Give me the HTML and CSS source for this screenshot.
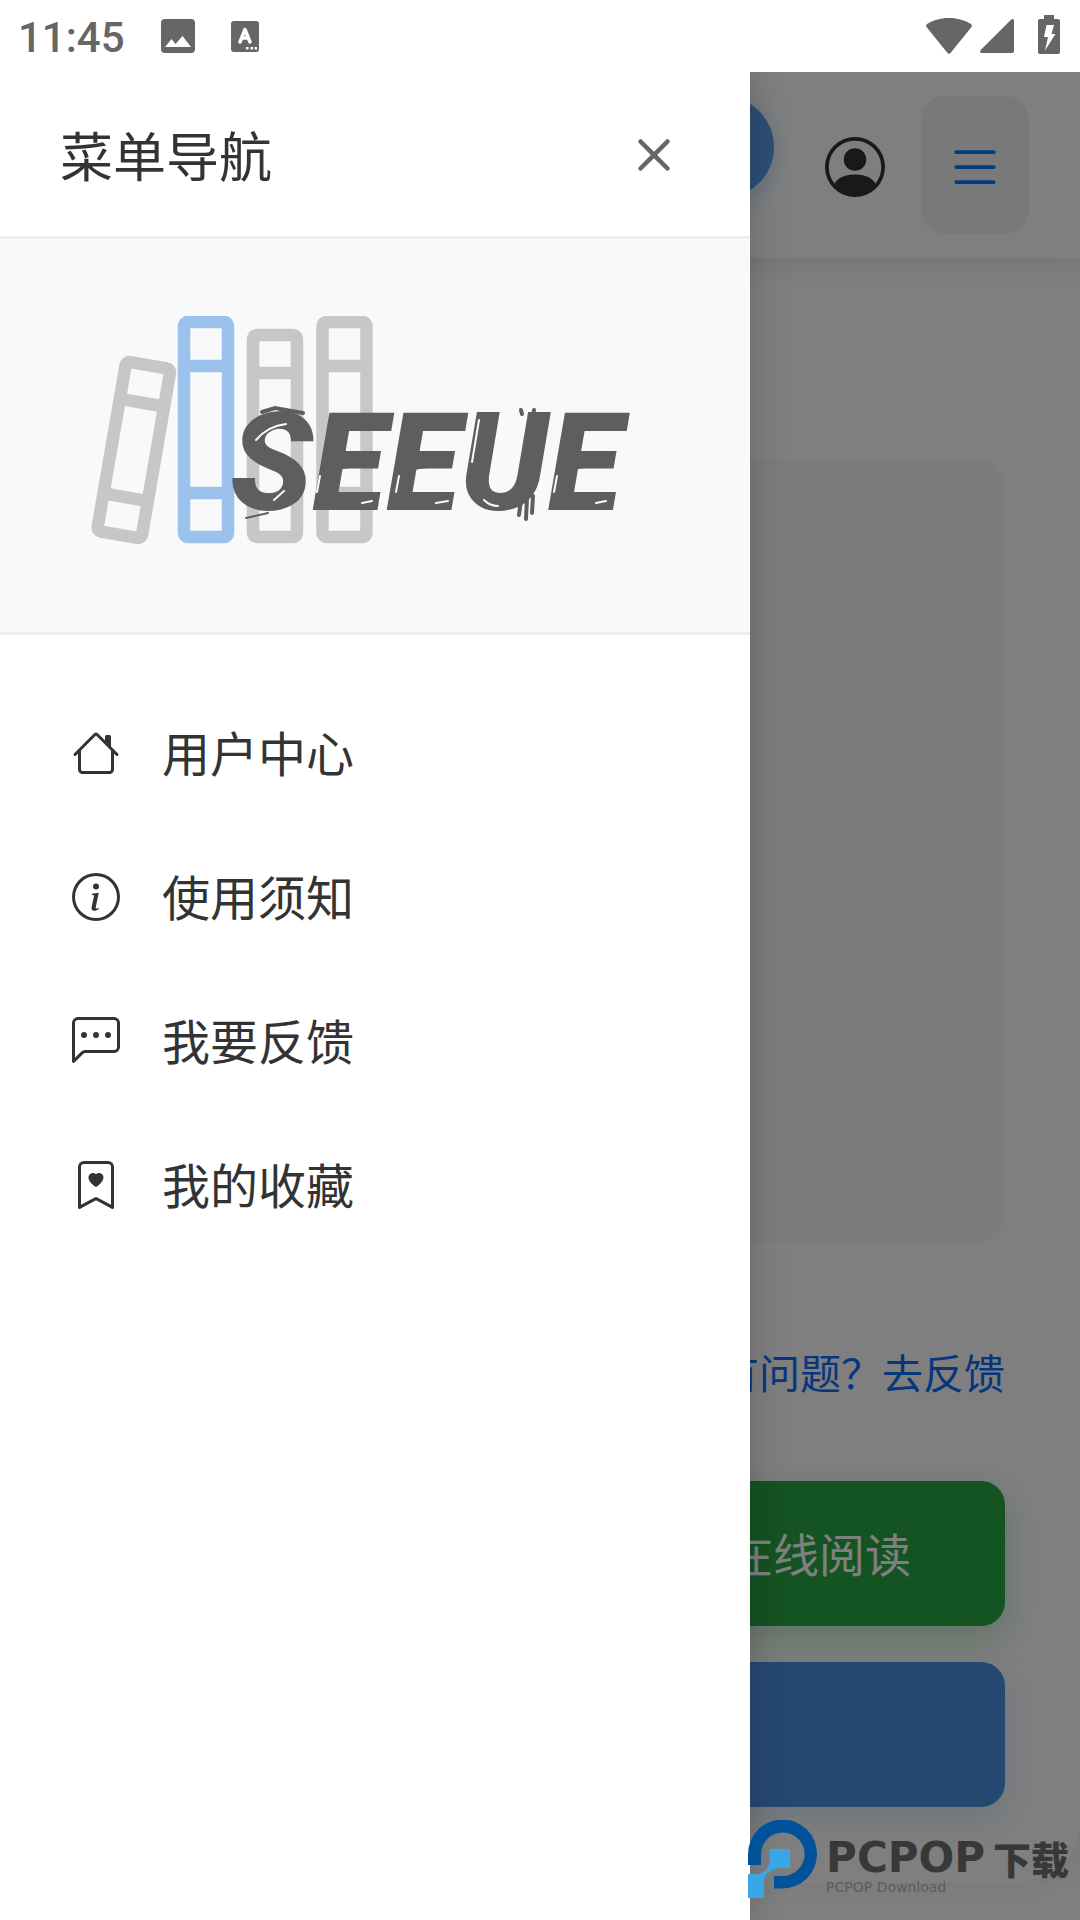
FILE: index.html
```html
<!DOCTYPE html>
<html lang="zh-CN">
<head>
<meta charset="utf-8">
<meta name="viewport" content="width=device-width, initial-scale=1">
<title>菜单导航</title>
<link rel="stylesheet" href="styles.css">
</head>
<body>
<div class="status-bar">
  <div class="status-group">
    <span class="clock">11:45</span>
    <svg class="status-picture" viewBox="0 0 34 34" aria-hidden="true"><path fill-rule="evenodd" d="M4 0H30Q34 0 34 4V30Q34 34 30 34H4Q0 34 0 30V4Q0 0 4 0ZM4 28H30L21.500 17L14.500 25L10.500 20Z"/></svg>
    <svg class="status-input" viewBox="0 0 28 31" aria-hidden="true"><rect width="28" height="31" rx="3"/><path d="M9 21L14 8.500L19 21M11 17H17" fill="none" stroke="#fff" stroke-width="3.500" stroke-linecap="round" stroke-linejoin="round"/><path d="M15 26h2.500v2.500H15zM19.500 26H22v2.500h-2.500zM23.500 26H26v2.500h-2.500z" fill="#fff"/></svg>
  </div>
  <div class="status-group status-group-end">
    <svg class="status-wifi" viewBox="0 0 46 36" aria-hidden="true"><path d="M23 0C14 0 7 2.500 1 6Q-.5 7.500 .5 9L21.500 35Q23 36.500 24.500 35L45.500 9Q46.500 7.500 45 6C39 2.500 32 0 23 0Z"/></svg>
    <svg class="status-cell" viewBox="0 0 34 34" aria-hidden="true"><path d="M31 .7Q34-1 34 2V32Q34 34 32 34H2Q-1 34 .7 31Z"/></svg>
    <svg class="status-battery" viewBox="0 0 22 39" aria-hidden="true"><path fill-rule="evenodd" d="M6 0H16V4H20Q22 4 22 6V37Q22 39 20 39H2Q0 39 0 37V6Q0 4 2 4H6ZM8.500 10L6 22H10L7 35.500L17.500 19H13.500L16 10Z"/></svg>
  </div>
</div>

<div class="app">
  <div class="page">
    <header class="page-header">
      <button class="search-button" type="button" aria-label="搜索"></button>
      <a class="account" href="#" aria-label="用户中心">
        <svg viewBox="0 0 16 16" aria-hidden="true"><path d="M11 6a3 3 0 1 1-6 0 3 3 0 0 1 6 0"/><path fill-rule="evenodd" d="M0 8a8 8 0 1 1 16 0A8 8 0 0 1 0 8m8-7a7 7 0 0 0-5.468 11.370C3.242 11.226 4.805 10 8 10s4.757 1.225 5.468 2.370A7 7 0 0 0 8 1"/></svg>
      </a>
      <button class="menu-button" type="button" aria-label="菜单">
        <svg viewBox="0 0 16 16" aria-hidden="true"><path fill-rule="evenodd" d="M2.500 12a.5.5 0 0 1 .5-.5h10a.5.5 0 0 1 0 1H3a.5.5 0 0 1-.5-.5m0-4a.5.5 0 0 1 .5-.5h10a.5.5 0 0 1 0 1H3a.5.5 0 0 1-.5-.5m0-4a.5.5 0 0 1 .5-.5h10a.5.5 0 0 1 0 1H3a.5.5 0 0 1-.5-.5"/></svg>
      </button>
    </header>
    <main class="content">
      <div class="cover"></div>
      <a class="feedback-link" href="#">有问题？去反馈</a>
      <button class="action action-read" type="button">在线阅读</button>
      <button class="action action-download" type="button" aria-label="下载"></button>
    </main>
  </div>

  <div class="backdrop"></div>

  <aside class="drawer">
    <div class="drawer-header">
      <h1 class="drawer-title">菜单导航</h1>
      <button class="close-button" type="button" aria-label="关闭">
        <svg viewBox="0 0 16 16" aria-hidden="true"><path d="M4.646 4.646a.5.5 0 0 1 .708 0L8 7.293l2.646-2.647a.5.5 0 0 1 .708.708L8.707 8l2.647 2.646a.5.5 0 0 1-.708.708L8 8.707l-2.646 2.647a.5.5 0 0 1-.708-.708L7.293 8 4.646 5.354a.5.5 0 0 1 0-.708"/></svg>
      </button>
    </div>
    <div class="brand">
      <svg class="brand-logo" viewBox="90 316 540 228" role="img" aria-label="SEEUE">
        <g fill="none" stroke-width="12.500">
          <g stroke="#c7c7c7">
            <g transform="rotate(9.800 134 449)"><rect x="111.500" y="364" width="45" height="172" rx="4"/><path d="M111.500 402H156.500M111.500 498H156.500"/></g>
            <rect x="253" y="335" width="44" height="202" rx="4"/><path d="M253 373H297M253 499H297"/>
            <rect x="322.500" y="322" width="44" height="215" rx="4"/><path d="M322.500 366H366.500M322.500 493H366.500"/>
          </g>
          <g stroke="#9ac2ec"><rect x="184" y="322" width="44" height="215" rx="4"/><path d="M184 366H228M184 493H228"/></g>
        </g>
        <text class="brand-word" x="230" y="510">SEEUE</text>
        <g fill="none" stroke="#5e5e5e" stroke-linecap="round">
          <path d="M246 518L268 513M340 429L368 429M418 429L446 429M574 429L602 429M335 469L357 466M413 469L434 466M570 469L592 466" stroke-width="2"/>
          <path d="M521 500L519 515M527 498L526 519M533 496L532 513" stroke-width="4"/>
          <path d="M262 412L275 408L303 413M522 414L521 410M533 416L534 410" stroke-width="4"/>
        </g>
        <g fill="none" stroke="#f8f9fb" stroke-width="2" stroke-linecap="round">
          <path d="M256 440Q268 426 286 424M274 500L284 491M320 476L317 492M399 476L396 492M557 476L554 492M479 420L472 462M484 500Q490 506 498 506M504 480L512 468M362 503L372 501M436 503L448 501M596 503L606 501"/>
        </g>
      </svg>
    </div>
    <nav class="menu">
      <a class="menu-item" href="#">
        <svg viewBox="0 0 16 16" aria-hidden="true"><path fill-rule="evenodd" d="M2 13.500V7h1v6.500a.5.5 0 0 0 .5.5h9a.5.5 0 0 0 .5-.5V7h1v6.500a1.500 1.500 0 0 1-1.500 1.500h-9A1.500 1.500 0 0 1 2 13.500m11-11V6l-2-2V2.500a.5.5 0 0 1 .5-.5h1a.5.5 0 0 1 .5.5"/><path fill-rule="evenodd" d="M7.293 1.500a1 1 0 0 1 1.414 0l6.647 6.646a.5.5 0 0 1-.708.708L8 2.207 1.354 8.854a.5.5 0 1 1-.708-.708z"/></svg>
        <span>用户中心</span>
      </a>
      <a class="menu-item" href="#">
        <svg viewBox="0 0 16 16" aria-hidden="true"><path d="M8 15A7 7 0 1 1 8 1a7 7 0 0 1 0 14m0 1A8 8 0 1 0 8 0a8 8 0 0 0 0 16"/><path d="m8.930 6.588-2.290.287-.082.380.450.083c.294.070.352.176.288.469l-.738 3.468c-.194.897.105 1.319.808 1.319.545 0 1.178-.252 1.465-.598l.088-.416c-.2.176-.492.246-.686.246-.275 0-.375-.193-.304-.533zM9 4.500a1 1 0 1 1-2 0 1 1 0 0 1 2 0"/></svg>
        <span>使用须知</span>
      </a>
      <a class="menu-item" href="#">
        <svg viewBox="0 0 16 16" aria-hidden="true"><path d="M14 1a1 1 0 0 1 1 1v8a1 1 0 0 1-1 1H4.414A2 2 0 0 0 3 11.586l-2 2V2a1 1 0 0 1 1-1zM2 0a2 2 0 0 0-2 2v12.793a.5.5 0 0 0 .854.353l2.853-2.853A1 1 0 0 1 4.414 12H14a2 2 0 0 0 2-2V2a2 2 0 0 0-2-2z"/><path d="M5 6a1 1 0 1 1-2 0 1 1 0 0 1 2 0m4 0a1 1 0 1 1-2 0 1 1 0 0 1 2 0m4 0a1 1 0 1 1-2 0 1 1 0 0 1 2 0"/></svg>
        <span>我要反馈</span>
      </a>
      <a class="menu-item" href="#">
        <svg viewBox="0 0 16 16" aria-hidden="true"><path fill-rule="evenodd" d="M8 4.410c1.387-1.425 4.854 1.070 0 4.277C3.146 5.480 6.613 2.986 8 4.412z"/><path d="M2 2a2 2 0 0 1 2-2h8a2 2 0 0 1 2 2v13.500a.5.5 0 0 1-.777.416L8 13.101l-5.223 2.815A.5.5 0 0 1 2 15.500zm2-1a1 1 0 0 0-1 1v12.566l4.723-2.482a.5.5 0 0 1 .554 0L13 14.566V2a1 1 0 0 0-1-1z"/></svg>
        <span>我的收藏</span>
      </a>
    </nav>
  </aside>

  <div class="watermark">
    <svg class="watermark-mark" viewBox="0 0 70 78" aria-hidden="true"><path d="M0 45V34A34.500 34.500 0 1 1 34.500 68.500H26V56H34.500A21.800 21.800 0 1 0 13 34V45Z" fill="#00529b"/><path d="M22 29H42V48H32C24 48 16 54 16 61V78H0V54H8C16 54 22 48 22 40Z" fill="#38a7e6"/></svg>
    <div class="watermark-text">
      <div class="watermark-name">PCPOP<span>下载</span></div>
      <div class="watermark-sub">PCPOP Download</div>
    </div>
  </div>
</div>
</body>
</html>
```
FILE: styles.css
```css
* {
  box-sizing: border-box;
}

body {
  margin: 0;
  min-height: 100vh;
  display: flex;
  flex-direction: column;
  background: #fff;
  color: #333;
  font-family: "Noto Sans CJK SC", sans-serif;
}

svg {
  display: block;
  flex: none;
}

button {
  border: 0;
  padding: 0;
  font: inherit;
}

a {
  color: inherit;
  text-decoration: none;
}

.status-bar {
  display: flex;
  justify-content: space-between;
  height: 72px;
  padding: 0 20px 0 18px;
  color: #666;
}

.status-group {
  display: flex;
  align-items: center;
  gap: 36px;
}

.status-group-end {
  gap: 8px;
}

.status-group svg {
  fill: currentColor;
}

.clock {
  padding-top: 4px;
  font: 500 42px/68px Roboto, sans-serif;
}

.status-picture {
  width: 34px;
}

.status-input {
  width: 28px;
}

.status-wifi {
  width: 46px;
}

.status-cell {
  width: 34px;
}

.status-battery {
  width: 22px;
  margin: 0 0 4px 16px;
}

.app {
  position: relative;
  flex: 1;
  overflow: hidden;
}

.page {
  min-height: 100%;
  background: #fcfcfc;
}

.page-header {
  position: relative;
  display: flex;
  align-items: center;
  justify-content: flex-end;
  padding: 24px 51px;
  background: #fff;
  box-shadow: 0 6px 30px rgba(0, 0, 0, 0.1);
}

.search-button {
  align-self: flex-start;
  width: 102px;
  height: 102px;
  border-radius: 51px;
  background: #5a9ced;
  box-shadow: 0 6px 24px rgba(74, 144, 226, 0.3);
}

.account {
  margin: 0 36px 0 51px;
  padding-top: 4px;
}

.account svg,
.menu-button svg {
  width: 60px;
  height: 60px;
}

.account svg {
  fill: #333;
}

.menu-button {
  padding: 41px 24px 37px;
  border-radius: 24px;
  background: #f2f2f2;
}

.menu-button svg {
  fill: #007bff;
}

.content {
  display: flex;
  flex-direction: column;
  gap: 36px;
  padding: 200px 75px 76px;
  border-radius: 0 0 60px 60px;
  background: #fff;
  box-shadow: 0 3px 30px rgba(0, 0, 0, 0.05);
}

.cover {
  height: 785px;
  border-radius: 30px;
  background: #f9f9f9;
}

.feedback-link {
  align-self: flex-end;
  margin: 62px 0 44px;
  color: #0d6efd;
  font-size: 41px;
  line-height: 60px;
}

.action {
  height: 145px;
  padding: 0 94px 4px;
  border-radius: 24px;
  color: #fff;
  font-size: 46px;
  text-align: right;
}

.action-read {
  background: #28a745;
  box-shadow: 0 12px 36px rgba(40, 167, 69, 0.3);
}

.action-download {
  background: #4a90e2;
  box-shadow: 0 12px 36px rgba(74, 144, 226, 0.2);
}

.backdrop {
  position: absolute;
  inset: 0;
  background: rgba(0, 0, 0, 0.5);
}

.drawer {
  position: absolute;
  inset: 0 auto 0 0;
  width: 750px;
  max-width: 100%;
  background: #fff;
  box-shadow: 6px 0 30px rgba(0, 0, 0, 0.15);
}

.drawer-header {
  display: flex;
  align-items: center;
  justify-content: space-between;
  padding: 42px 60px;
  border-bottom: 3px solid #eee;
}

.drawer-title {
  margin: 0;
  font-size: 53px;
  font-weight: 400;
  line-height: 80px;
}

.close-button {
  padding-top: 2px;
  background: none;
}

.close-button svg {
  width: 72px;
  height: 72px;
  fill: #666;
}

.brand {
  padding: 77px 90px 88px;
  border-bottom: 3px solid #eee;
  background: #f8f9fb;
}

.brand-logo {
  width: 540px;
  max-width: 100%;
}

.brand-word {
  fill: #5e5e5e;
  font: italic 900 136px Roboto, sans-serif;
}

.menu {
  display: flex;
  flex-direction: column;
  padding: 47px 72px;
}

.menu-item {
  display: flex;
  align-items: center;
  gap: 42px;
  height: 144px;
  padding-bottom: 2px;
  font-size: 48px;
}

.menu-item span {
  padding-bottom: 4px;
}

.menu-item svg {
  width: 48px;
  height: 48px;
  fill: #333;
}

.watermark {
  position: absolute;
  right: 11px;
  bottom: 22px;
  display: flex;
  gap: 8px;
}

.watermark-mark {
  width: 70px;
}

.watermark-text {
  padding-top: 16px;
}

.watermark-name {
  display: flex;
  align-items: center;
  gap: 8px;
  color: #383838;
  font: 700 42px/44px "DejaVu Sans", sans-serif;
}

.watermark-name span {
  font: 900 38px/44px "Noto Sans CJK SC", sans-serif;
}

.watermark-sub {
  color: #5c5c5c;
  font: 14px/14px "DejaVu Sans", sans-serif;
}
```
